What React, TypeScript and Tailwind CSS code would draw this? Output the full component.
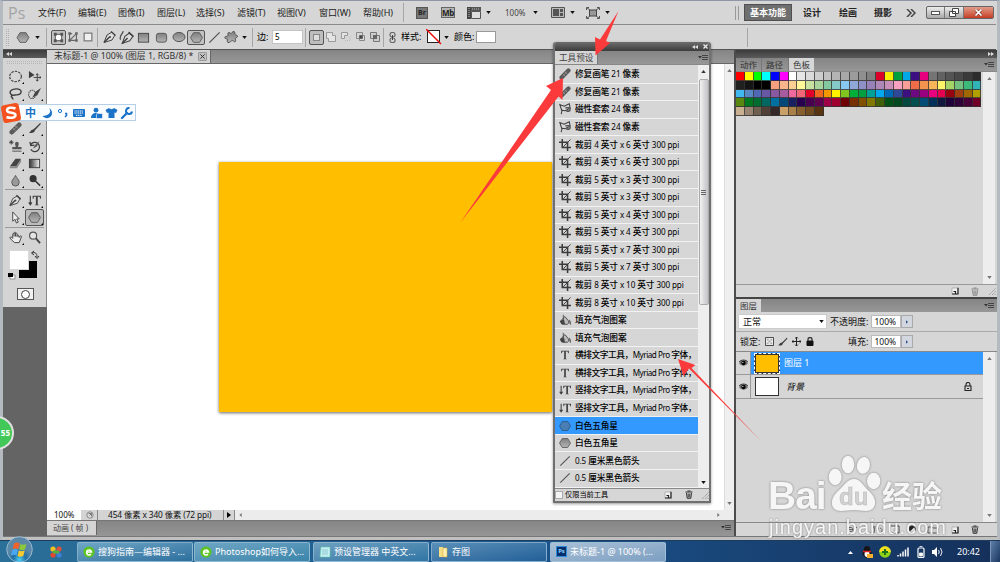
import type { ReactNode } from 'react'

const MENUS = [
  { label: '文件(F)', w: 'w-[40px]' },
  { label: '编辑(E)', w: 'w-[40px]' },
  { label: '图像(I)', w: 'w-[39px]' },
  { label: '图层(L)', w: 'w-[39px]' },
  { label: '选择(S)', w: 'w-[41px]' },
  { label: '滤镜(T)', w: 'w-[40px]' },
  { label: '视图(V)', w: 'w-[42px]' },
  { label: '窗口(W)', w: 'w-[44px]' },
  { label: '帮助(H)', w: 'w-[40px]' },
]

const PRESETS = [
  ['heal', '修复画笔 21 像素'],
  ['heal', '修复画笔 21 像素'],
  ['lasso', '磁性套索 24 像素'],
  ['lasso', '磁性套索 24 像素'],
  ['crop', '裁剪 4 英寸 x 6 英寸 300 ppi'],
  ['crop', '裁剪 4 英寸 x 6 英寸 300 ppi'],
  ['crop', '裁剪 5 英寸 x 3 英寸 300 ppi'],
  ['crop', '裁剪 5 英寸 x 3 英寸 300 ppi'],
  ['crop', '裁剪 5 英寸 x 4 英寸 300 ppi'],
  ['crop', '裁剪 5 英寸 x 4 英寸 300 ppi'],
  ['crop', '裁剪 5 英寸 x 7 英寸 300 ppi'],
  ['crop', '裁剪 5 英寸 x 7 英寸 300 ppi'],
  ['crop', '裁剪 8 英寸 x 10 英寸 300 ppi'],
  ['crop', '裁剪 8 英寸 x 10 英寸 300 ppi'],
  ['bucket', '填充气泡图案'],
  ['bucket', '填充气泡图案'],
  ['type', '横排文字工具，Myriad Pro 字体，'],
  ['type', '横排文字工具，Myriad Pro 字体，'],
  ['vtype', '竖排文字工具，Myriad Pro 字体，'],
  ['vtype', '竖排文字工具，Myriad Pro 字体，'],
  ['hexblue', '白色五角星'],
  ['hex', '白色五角星'],
  ['line', '0.5 厘米黑色箭头'],
  ['line', '0.5 厘米黑色箭头'],
]

const SWATCHES = (
  'ff0000 ffff00 00ff00 00ffff 0000ff ff00ff ffffff e6e6e6 dadada cdcdcd c0c0c0 b4b4b4 a8a8a8 9c9c9c 909090 808080 dc0028 f8f000 00a040 00a8e8 3c1080 e6007e 757575 626262 545454 484848 3a3a3a 2c2c2c ' +
  '202020 141414 000000 000000 f6a080 f9b48c fbcf92 fff799 c8e0a0 a8d49c 84c8a0 86c8c8 88c8f0 90a8d8 9090c8 9880b8 b088b8 c890b8 f8a0c0 f8a098 ee6c48 f29450 f8b458 fff468 a4d468 74c080 3cb878 30b4b8 ' +
  '40b8f0 5888c4 5068b4 6858a4 8858a0 a85ca0 f068a0 f06878 e00028 f06820 f49800 fff100 80c420 00b038 00a040 00a098 00a8f0 0068b8 304898 3c1080 6c0880 980080 e80080 e80050 980010 a04010 a06800 b0a000 ' +
  '588810 007820 006c30 006860 0070a0 004878 182060 280050 480050 600050 a00048 a00030 700008 783000 805000 807800 406008 005018 004820 004840 005050 004c74 003058 101840 200038 300038 480038 700028 ' +
  'c8b090 988470 706050 504038 342828 c8a068 a88048 886030 704c20 583410'
).split(' ')

const TASKS = [
  { kind: 'ie', label: '搜狗指南—编辑器 - ...', cls: 'ml-[15px] from-[#6fa6c4] to-[#2c6f9e]' },
  { kind: 'ie', label: 'Photoshop如何导入...', cls: 'ml-px from-[#6fa6c4] to-[#3a85ab]' },
  { kind: 'note', label: '预设管理器 中英文...', cls: 'ml-[3px] from-[#6fa0bf] to-[#2f75a5]' },
  { kind: 'folder', label: '存图', cls: 'ml-[2px] from-[#5a90b8] to-[#225f98]' },
  { kind: 'ps', label: '未标题-1 @ 100% (...', cls: 'ml-[3px] from-[#a9c0d6] to-[#7d9fc2]' },
]

function Glyph({ name }: { name: string }) {
  const s = { fill: 'none', stroke: '#3c3c3c', strokeWidth: 1.3 }
  switch (name) {
    case 'marquee':
      return <ellipse cx="7" cy="7" rx="6.3" ry="5.6" {...s} strokeWidth="1.2" strokeDasharray="2.6 1.2" />
    case 'move':
      return <g><path d="M1 1v8l6-3.7z" fill="#3c3c3c" /><path d="M10 4v8M6 8h8M8.7 5.5 10 4l1.3 1.5M8.7 10.500l1.300 1.500 1.300-1.500M12.500 6.700 14 8l-1.500 1.300" {...s} strokeWidth="1" /></g>
    case 'freelasso':
      return <path d="M3.500 9C-1 6.500 1.500 2 8 2c7 0 6.500 6 0 6.500-3 .2-5 0-5.500 1.500s2.500 1.500 1.500 3.500" {...s} strokeWidth="1.500" />
    case 'quick':
      return <g><ellipse cx="4.500" cy="8" rx="3.800" ry="4.500" {...s} strokeDasharray="1.500 .8" strokeWidth="1.100" /><path d="M14 1 8 5l-3.500 6.500L10 9z" fill="#444" /></g>
    case 'heal':
      return <g><path d="M3 11 11 3" stroke="#5a5a5a" strokeWidth="5" strokeLinecap="round" /><path d="m4.600 7 2.400 2.400M7 4.600 9.400 7" stroke="#c4c4c4" strokeWidth="1" strokeDasharray="1 .6" /><path d="m4.500 9 5-5" stroke="#8c8c8c" strokeWidth="1" /></g>
    case 'brush':
      return <path d="M13 1 7.500 6.500 5.500 8C3 8.200 3 10.500 1 11.500c3 1 6 .5 6.500-2.500L14 2z" fill="#3c3c3c" />
    case 'stamp':
      return <g><path d="M8.500 2a2 2 0 0 1 2 2c0 1-.7 2-.7 3.500h3.700V10h-10V7.500h3.700C7.200 6 6.500 5 6.500 4a2 2 0 0 1 2-2z" fill="#555" /><path d="M3.500 12h10M1 1l3 3M4 1 1 4M2.500 0v5M0 2.500h5" {...s} strokeWidth=".9" /></g>
    case 'history':
      return <g><path d="M3 5a5 5 0 1 1 0 5M2 2l1 4 4-.5" {...s} /><path d="M12.500 1 8 5 5 9.500 9.500 7z" fill="#555" /></g>
    case 'eraser':
      return <g><path d="M7 2h6L8 10H1z" fill="#444" /><path d="M8 10 13 2v3l-4.500 7H1v-2z" fill="#888" /></g>
    case 'gradient':
      return <rect x="1.500" y="2.500" width="11" height="9" fill="url(#grad)" stroke="#3c3c3c" />
    case 'drop':
      return <path d="M7 1.500C6 4.500 3 6 3 9a4 4 0 0 0 8 0C11 6 8 4.500 7 1.500z" fill="#999" stroke="#555" />
    case 'dodge':
      return <g><circle cx="5.500" cy="5" r="3.800" fill="#333" /><path d="m8 7.500 5 5" stroke="#333" strokeWidth="1.600" /></g>
    case 'pen':
      return <g><path d="M1 12.500 4 5l5-3 3 3-3 5z" fill="#ddd" stroke="#444" /><path d="m8 1.500 4.500 4M1 12.500l5.500-5.500" stroke="#444" strokeWidth="1.500" /><circle cx="7" cy="7" r="1" fill="#444" /></g>
    case 'freepen':
      return <g><path d="M3 12.500 5.500 6l4-3L13 6l-3 4z" fill="#ddd" stroke="#444" /><path d="M3 12.500 8 7.500M9 2l4.500 4" {...s} /><path d="M1.500 9C-.5 6 3.500 4 4 1" {...s} strokeWidth="1" /></g>
    case 'vtype':
      return <g><path d="M2.500 2v9M.8 9l1.700 2.500L4.200 9" {...s} strokeWidth="1.200" /><path d="M5 2h9v3h-.8L12.500 3h-2v8l1.200 1H7.300l1.200-1V3h-2L5.800 5H5z" fill="#444" /></g>
    case 'type':
      return <path d="M2.500 2h9v3h-.8L10 3H8v8l1.200 1H4.800L6 11V3H4l-.7 2h-.8z" fill="#444" />
    case 'arrow':
      return <path d="M4 1v10l2.500-2L8 13l2-1-1.700-3.500H11z" fill="#eee" stroke="#444" />
    case 'hex':
    case 'hexblue':
      return <path d="M3.800 1.800h6.400L13.400 7l-3.200 5.200H3.800L.6 7z" fill={name === 'hexblue' ? '#4a7fb5' : 'url(#hexg)'} stroke={name === 'hexblue' ? '#2c5684' : '#5a5a5a'} />
    case 'hand':
      return <path d="M4 8V3.500c0-1 1.500-1 1.500 0V2c0-1 1.500-1 1.500 0v1c0-1 1.700-1 1.700 0v2c0-1 1.600-1 1.600 0L11 7l1-1.500c.8-.8 1.800 0 1.300 1L11 12.500H6C4 11 2.500 9.500 1 7.500 1 6 2.500 6 4 8zM5.500 3.500V6M7 3v3M8.700 5v1.500" fill="#ececec" stroke="#3c3c3c" strokeWidth="1" />
    case 'zoom':
      return <g><circle cx="5.500" cy="5" r="3.800" fill="#e4e4e4" stroke="#555" strokeWidth="1.200" /><path d="m8.500 8 4.500 5" stroke="#444" strokeWidth="2" /></g>
    case 'lasso':
      return <g><path d="M3 13c-1.500-1.500 1-2 .3-4L1 1.800l5 2L12 1l1 5-6 3-3.500-.5" {...s} strokeWidth="1.200" /><path d="M7.500 5.500h4c1.800 0 1.800 4 0 4h-3" {...s} stroke="#555" strokeWidth="1.800" /></g>
    case 'crop':
      return <g><path d="M3.800 0v10H14M0 3.800h10V14" {...s} strokeWidth="1.800" /><path d="M5 9 13.500.5" {...s} strokeWidth="1.100" /></g>
    case 'bucket':
      return <g><path d="M5 1v6M2 8l5-5 4 5c1 2 0 3-1 4H4z" fill="#bbb" stroke="#444" /><path d="M1 9c1-2 3-3 5-2l1 5H3zM12 6c2 2 2 5 1.500 7-1.500-2-1.500-4-1.500-7z" fill="#444" /></g>
    case 'line':
      return <path d="M1.500 12.500 12.500 1.500" {...s} stroke="#555" />
    case 'rect':
      return <rect x="1.500" y="2.500" width="11" height="9.500" fill="url(#hexg)" stroke="#444" />
    case 'rrect':
      return <rect x="1.500" y="2.500" width="11" height="9.500" rx="2.500" fill="url(#hexg)" stroke="#555" />
    case 'ellipse':
      return <ellipse cx="7" cy="7" rx="6" ry="4.600" fill="url(#hexg)" stroke="#555" />
    case 'blob':
      return <path d="M5 2.500c1.500 0 1.500 1.500 2.300 1 1-.7.900-2.500 2.700-2 1.700.6.300 2.500 1 3.200s2.800.1 2.500 1.800c-.3 1.400-2 1-2.200 1.800s1.200 3-.3 3.500c-1.300.4-1.500-1.500-2.800-1.300S6 13 4 12.500c-1.800-.6 0-2.500-.5-3.200S.800 9 .8 7.500 3.500 6.500 4 6s-1-3.500 1-3.500z" fill="url(#hexg)" stroke="#555" />
    case 'shapelayer':
      return <g><rect x="3.500" y="3.500" width="7" height="7" fill="#fff" stroke="#444" /><path d="M2 2h3v3H2zM9 2h3v3H9zM2 9h3v3H2zM9 9h3v3H9z" fill="#555" /></g>
    case 'paths':
      return <g><path d="M3 3v8l8-8v8M3 3h3M4 11h6" {...s} stroke="#666" /><path d="M1.500 1.500h3v3h-3zM9.500 1.500h3v3h-3zM1.500 9.500h3v3h-3zM9.500 9.500h3v3h-3z" fill="#666" /></g>
    case 'pixels':
      return <rect x="2.500" y="2.500" width="9" height="9" fill="#f0f0f0" stroke="#777" strokeWidth="1.400" />
    default:
      return null
  }
}

function Icon({ name, size = 'w-[14px] h-[14px]' }: { name: string; size?: string }) {
  return (
    <svg viewBox="0 0 14 14" className={`${size} shrink-0`}>
      <Glyph name={name} />
    </svg>
  )
}

function Caret({ className = '' }: { className?: string }) {
  return (
    <svg viewBox="0 0 6 4" className={`w-[5px] h-[3px] shrink-0 ${className}`}>
      <path d="M0 0h6L3 4z" fill="#111" />
    </svg>
  )
}

function Sep({ className = '' }: { className?: string }) {
  return <div className={`w-px h-[19px] shrink-0 bg-[#a5a5a5] ${className}`} />
}

function PanelMenu() {
  return (
    <svg viewBox="0 0 10 8" className="w-[10px] h-[8px] shrink-0">
      <path d="M0 2h4L2 4.500z" fill="#333" />
      <path d="M4 1.500h6M4 3.500h6M4 5.500h6" stroke="#444" strokeWidth="1" />
    </svg>
  )
}

function Chevrons({ right = false }: { right?: boolean }) {
  return (
    <svg viewBox="0 0 6 4" className="w-[6px] h-[4px] shrink-0">
      <path d={right ? 'M0 0v4l3-2zM3 0v4l3-2z' : 'M3 0v4L0 2zM6 0v4L3 2z'} fill="#ddd" />
    </svg>
  )
}

function NewIcon() {
  return (
    <svg viewBox="0 0 8 8" className="w-[8px] h-[8px] shrink-0">
      <path d="M1 1h6v6H1z" fill="#f0f0f0" stroke="#aaa" strokeWidth=".8" />
      <path d="M7 .8V7H1M4.500 7V4.500H2.500" fill="none" stroke="#222" strokeWidth="1.200" />
    </svg>
  )
}

function TrashIcon({ dim = false }: { dim?: boolean }) {
  return (
    <svg viewBox="0 0 8 9" className="w-[8px] h-[9px] shrink-0">
      <path d="M.5 2h7M2.500 1h3M1.500 3l.7 5.300h3.600L6.500 3M3.200 3.500v4M4.800 3.500v4" fill="none" stroke={dim ? '#888' : '#333'} strokeWidth="1" />
    </svg>
  )
}

function Grip() {
  return (
    <svg viewBox="0 0 8 8" className="w-[8px] h-[8px] shrink-0">
      <path d="M1 8 8 1M4 8l4-4M6.500 8 8 6.500" stroke="#9a9a9a" strokeWidth="1" strokeDasharray="1.400 .5" />
    </svg>
  )
}

function ScrollArrow({ down = false }: { down?: boolean }) {
  return (
    <svg viewBox="0 0 6 4" className="w-[5px] h-[3px] shrink-0">
      <path d={down ? 'M0 0h6L3 4z' : 'M0 4h6L3 0z'} fill="#777" />
    </svg>
  )
}

function MenuBar() {
  return (
    <div className="flex items-center h-[23px] shrink-0 text-[9px] text-[#222]">
      <div className="w-[35px] pl-[5px] text-[16px] leading-none text-[#a4a4a4] font-['Open_Sans']">Ps</div>
      {MENUS.map((m) => (
        <div key={m.label} className={`${m.w} shrink-0 whitespace-nowrap`}>{m.label}</div>
      ))}
      <Sep className="h-[15px]" />
      <div className="ml-[12px] w-[12px] h-[12px] bg-[#777] border border-[#555] text-[7px] leading-[10px] font-bold text-center text-[#222]">Br</div>
      <div className="ml-[13px] w-[14px] h-[11px] bg-[#b5b5b5] border border-[#666] text-[8px] leading-[9px] font-bold text-center tracking-tighter text-[#222]">Mb</div>
      <svg viewBox="0 0 14 12" className="ml-[12px] w-[14px] h-[12px]">
        <path d="M0 0h4v12H0z" fill="#444" />
        <path d="M4 0h10v4H4z" fill="#555" />
        <path d="M4.500 4.500h9v7h-9z" fill="#ddd" stroke="#555" />
        <path d="M2 1v10M5 2h8" stroke="#bbb" strokeDasharray="1 1" />
      </svg>
      <Caret className="ml-[5px]" />
      <div className="ml-[14px] w-[25px] text-[8px] text-[#444]">100%</div>
      <Caret className="ml-[3px]" />
      <svg viewBox="0 0 14 11" className="ml-[13px] w-[14px] h-[11px]">
        <path d="M.5.5h13v10H.5z" fill="#bbb" stroke="#555" />
        <path d="M2 2h6v7H2zM9 2h3v3H9zM9 6h3v3H9z" fill="#555" />
      </svg>
      <Caret className="ml-[5px]" />
      <svg viewBox="0 0 14 12" className="ml-[11px] w-[14px] h-[12px]">
        <path d="M3.500 3h7v6h-7z" fill="#999" stroke="#444" />
        <path d="M.5 3V.5H3M11 .5h2.500V3M13.500 9v2.500H11M3 11.500H.5V9M1 1l3 2M13 1l-3 2M1 11l3-2M13 11l-3-2" stroke="#555" fill="none" />
      </svg>
      <Caret className="ml-[5px]" />
      <div className="ml-auto w-[4px] h-[14px] border-x border-[#999]" />
      <div className="ml-[5px] w-[48px] h-[17px] bg-[#6e6e6e] border border-[#4f4f4f] text-white font-bold text-center leading-[15px]">基本功能</div>
      <div className="ml-[11px] w-[36px] font-bold">设计</div>
      <div className="w-[35px] font-bold">绘画</div>
      <div className="w-[32px] font-bold">摄影</div>
      <svg viewBox="0 0 10 8" className="w-[10px] h-[8px]">
        <path d="m1 0 4 4-4 4M5 0l4 4-4 4" fill="none" stroke="#444" strokeWidth="1.500" />
      </svg>
      <div className="ml-[10px] mr-[3px] flex w-[68px] h-[13px] rounded-[2px] border border-[#666] overflow-hidden bg-gradient-to-b from-[#ececec] to-[#aaa]">
        <div className="w-[18px] border-r border-[#777] flex items-center justify-center">
          <div className="w-[9px] h-[4px] bg-white border border-[#555]" />
        </div>
        <div className="w-[19px] border-r border-[#777] flex items-center justify-center">
          <svg viewBox="0 0 10 9" className="w-[10px] h-[9px]">
            <path d="M3.500.5h6v5h-6zM.5 3.500h6v5h-6z" fill="#fff" stroke="#444" />
          </svg>
        </div>
        <div className="flex-1 bg-gradient-to-b from-[#e09a88] to-[#c43a22] flex items-center justify-center">
          <svg viewBox="0 0 8 7" className="w-[9px] h-[7px]">
            <path d="m1 .5 6 6M7 .5l-6 6" stroke="#6b2a20" strokeWidth="2.600" />
            <path d="m1 .5 6 6M7 .5l-6 6" stroke="#fff" strokeWidth="1.700" />
          </svg>
        </div>
      </div>
    </div>
  )
}

function OptionsBar() {
  return (
    <div className="flex items-center h-[26px] shrink-0 border-y border-[#8a8a8a] border-b-[#555] text-[9px] text-black pl-[3px] mr-[1px]">
      <div className="w-[3px] h-[17px] border-x border-dotted border-[#b0b0b0]" />
      <Icon name="hex" size="ml-[7px] w-[14px] h-[13px]" />
      <Caret className="ml-[5px]" />
      <Sep className="ml-[6px]" />
      <div className="ml-[4px] w-[15px] h-[15px] border border-[#555] rounded-[2px] bg-[#c2c2c2]"><Icon name="shapelayer" size="w-[13px] h-[13px]" /></div>
      <Icon name="paths" size="ml-[1px] w-[12px] h-[12px]" />
      <Icon name="pixels" size="ml-[3px] w-[12px] h-[12px]" />
      <Sep className="ml-[3px]" />
      <Icon name="pen" size="ml-[5px] w-[14px] h-[14px]" />
      <Icon name="freepen" size="ml-[2px] w-[15px] h-[15px]" />
      <Icon name="rect" size="ml-[3px] w-[13px] h-[13px]" />
      <Icon name="rrect" size="ml-[5px] w-[13px] h-[13px]" />
      <Icon name="ellipse" size="ml-[4px] w-[14px] h-[14px]" />
      <div className="ml-[1px] w-[18px] h-[15px] flex justify-center border border-[#555] rounded-[2px] bg-[#c2c2c2]"><Icon name="hex" size="w-[13px] h-[13px]" /></div>
      <Icon name="line" size="ml-[3px] w-[13px] h-[13px]" />
      <Icon name="blob" size="ml-[3px] w-[14px] h-[14px]" />
      <Caret className="ml-[4px]" />
      <Sep className="ml-[5px]" />
      <div className="ml-[4px] w-[15px] whitespace-nowrap">边:</div>
      <div className="w-[31px] h-[14px] bg-white border border-[#c4c4c4] pl-[2px] text-[8px] leading-[12px]">5</div>
      <Sep className="ml-[2px]" />
      <div className="ml-[3px] w-[15px] h-[15px] border border-[#555] rounded-[2px] bg-[#bdbdbd] p-[3px]"><div className="h-full bg-[#ddd] border border-[#888]" /></div>
      <svg viewBox="0 0 54 10" className="ml-[2px] w-[54px] h-[10px]">
        <path d="M.5.5h6v3h3v6h-7v-3h-2z" fill="#e4e4e4" stroke="#999" />
        <path d="M15.500 6.500v-6h6v3h-3v3z" fill="#e4e4e4" stroke="#999" />
        <path d="M19 8.500h5v-5" fill="none" stroke="#bbb" strokeDasharray="1 1" />
        <path d="M30.500.5h6v6h-6zM33.500 3.500h5v5h-5z" fill="none" stroke="#888" />
        <path d="M33.500 3.500h3v3h-3z" fill="#444" />
        <path d="M44.500.5h6v3h3v6h-6v-3h-3z" fill="#ccc" stroke="#777" />
        <path d="M47 3h4v4h-4z" fill="#666" />
      </svg>
      <Sep className="ml-[3px]" />
      <svg viewBox="0 0 7 11" className="ml-[5px] w-[7px] h-[11px]">
        <rect x="1" y=".5" width="5" height="4.500" rx="2" fill="none" stroke="#666" strokeWidth="1.200" />
        <rect x="1" y="6" width="5" height="4.500" rx="2" fill="none" stroke="#666" strokeWidth="1.200" />
        <path d="M3.500 3v5" stroke="#444" />
      </svg>
      <div className="ml-[5px] w-[25px] whitespace-nowrap">样式:</div>
      <svg viewBox="0 0 16 16" className="w-[16px] h-[16px]">
        <rect x="1.500" y="1.500" width="12" height="12" fill="#fff" stroke="#222" />
        <path d="m0 0 15 15" stroke="#e81010" strokeWidth="1.500" />
      </svg>
      <Caret className="ml-[2px]" />
      <div className="ml-[5px] w-[22px] whitespace-nowrap">颜色:</div>
      <div className="w-[20px] h-[12px] bg-white border border-[#999]" />
      <Sep className="ml-auto mr-[248px]" />
    </div>
  )
}

const TOOL_ROWS: [string, string][] = [
  ['marquee', 'move'],
  ['freelasso', 'quick'],
  ['crop', 'type'],
  ['heal', 'brush'],
  ['stamp', 'history'],
  ['eraser', 'gradient'],
  ['drop', 'dodge'],
]

function ToolCell({ name, active = false, corner = true }: { name: string; active?: boolean; corner?: boolean }) {
  return (
    <div className={`relative w-[19px] h-[17px] flex items-center justify-center border rounded-[2px] ${active ? 'border-[#555] bg-[#bcbcbc]' : 'border-transparent'}`}>
      <Icon name={name} size="w-[13px] h-[13px]" />
      {corner && (
        <svg viewBox="0 0 3 3" className="absolute right-0 bottom-0 w-[2px] h-[2px]">
          <path d="M3 0v3H0z" fill="#000" />
        </svg>
      )}
    </div>
  )
}

function Toolbox() {
  return (
    <div className="flex flex-col w-[44px] shrink-0 bg-[#646464]">
      <div className="h-[8px] shrink-0 bg-gradient-to-b from-[#3c3c3c] to-[#5a5a5a] pl-[3px] pt-[2px]"><Chevrons /></div>
      <div className="h-[249px] shrink-0 bg-[#d4d4d4] flex flex-col border-r border-[#888]">
        <div className="mt-[3px] mx-[4px] h-[3px] border-y border-dotted border-[#b4b4b4]" />
        <div className="mt-[4px] flex flex-col gap-[0.4px] pl-[3px]">
          {TOOL_ROWS.map(([a, b]) => (
            <div key={a} className="flex"><ToolCell name={a} /><ToolCell name={b} corner={b !== 'move'} /></div>
          ))}
        </div>
        <div className="mx-[2px] h-px shrink-0 bg-[#999]" />
        <div className="mt-[2px] flex flex-col pl-[3px]">
          <div className="flex"><ToolCell name="pen" /><ToolCell name="vtype" /></div>
          <div className="flex"><ToolCell name="arrow" /><ToolCell name="hex" active /></div>
        </div>
        <div className="mx-[2px] h-px mt-px shrink-0 bg-[#999]" />
        <div className="mt-[1px] flex pl-[3px]"><ToolCell name="hand" /><ToolCell name="zoom" corner={false} /></div>
        <svg viewBox="0 0 34 32" className="ml-[4px] mt-[2px] w-[34px] h-[32px] shrink-0">
          <rect x="12" y="13" width="18" height="17" fill="#000" />
          <rect x="2.500" y="2.500" width="19" height="19" fill="#fff" stroke="#d8d8d8" />
          <path d="M25 5c3-1 5 0 5 4M27 3l-2.500 2L27 7M28 8l2 2.500L32 8" fill="none" stroke="#333" />
          <path d="M3 27h5v4H3z" fill="#fff" stroke="#555" strokeWidth=".6" />
          <path d="M1 25h5v4H1z" fill="#000" />
        </svg>
        <div className="ml-[14px] mt-[8px] w-[17px] h-[12px] bg-[#f2f2f2] border border-[#555] flex items-center justify-center">
          <div className="w-[9px] h-[9px] rounded-full bg-white border border-[#444]" />
        </div>
      </div>
    </div>
  )
}

function Document() {
  return (
    <div className="flex flex-col flex-1 min-w-0 bg-[#8d8d8d]">
      <div className="h-[14px] shrink-0 bg-gradient-to-b from-[#858585] to-[#979797] border-b border-[#666] flex">
        <div className="w-[164px] h-[13px] bg-[#d4d4d4] border-r border-[#666] pl-[7px] flex items-center text-[8.8px] text-[#333]">
          <span className="w-[144px] shrink-0 whitespace-nowrap leading-[13px]">未标题-1 @ 100% (图层 1, RGB/8) *</span>
          <span className="w-[9px] h-[9px] shrink-0 bg-[#c2c2c2] border border-[#999] rounded-[1px] flex items-center justify-center">
            <svg viewBox="0 0 6 6" className="w-[5px] h-[5px]"><path d="m.5.5 5 5m0-5-5 5" stroke="#333" strokeWidth="1.200" /></svg>
          </span>
        </div>
      </div>
      <div className="flex flex-1 min-h-0">
        <div className="flex-1 bg-white pt-[98px] pl-[172px]">
          <div className="w-[333px] h-[250px] bg-[#ffbf00] shadow-[0_1px_3px_rgba(0,0,0,0.6)]" />
        </div>
        <div className="w-[10px] bg-[#efefef] border-l border-[#ddd] flex flex-col items-center justify-between pt-[5px] pb-[5px]">
          <ScrollArrow />
          <ScrollArrow down />
        </div>
      </div>
      <div className="h-[11px] shrink-0 flex items-center bg-[#ececec] text-[8px] leading-[10px] text-[#111] border-b border-[#777]">
        <div className="w-[34px] h-[10px] bg-white pl-[7px]">100%</div>
        <div className="w-[17px] h-[10px] bg-[#d4d4d4] border-r border-[#888] flex items-center pl-[5px]">
          <svg viewBox="0 0 8 8" className="w-[8px] h-[8px]"><circle cx="4" cy="4" r="3.200" fill="#ddd" stroke="#888" /><path d="M2.500 2.500h3v3M5.500 2.500l-2 2" fill="none" stroke="#777" /></svg>
        </div>
        <div className="w-[126px] h-[10px] bg-[#d4d4d4] border-r border-[#888] pl-[10px] text-[8.300px] tracking-[-0.1px] whitespace-nowrap">454 像素 x 340 像素 (72 ppi)</div>
        <div className="w-[11px] h-[10px] bg-[#d4d4d4] border-r border-[#888] flex items-center justify-center">
          <svg viewBox="0 0 4 6" className="w-[4px] h-[6px]"><path d="M0 0v6l4-3z" fill="#000" /></svg>
        </div>
        <svg viewBox="0 0 3 5" className="ml-[4px] w-[3px] h-[4px]"><path d="M3 0v5L0 2.500z" fill="#777" /></svg>
        <svg viewBox="0 0 3 5" className="ml-auto mr-[14px] w-[3px] h-[4px]"><path d="M0 0v5l3-2.500z" fill="#777" /></svg>
      </div>
      <div className="h-[15px] shrink-0 flex justify-between bg-gradient-to-b from-[#858585] to-[#969696]">
        <div className="w-[50px] h-[14px] bg-[#d4d4d4] border-r border-[#666] pl-[6px] text-[8px] leading-[13px] text-[#444] whitespace-pre">动画 ( 帧 )</div>
        <div className="pt-[3px] pr-[3px]"><PanelMenu /></div>
      </div>
    </div>
  )
}

function PercentField({ label }: { label: string }) {
  return (
    <div className="flex items-center">
      <span className="whitespace-nowrap mr-[3px]">{label}</span>
      <div className="w-[30px] h-[13px] bg-white border border-[#bbb] text-[8.500px] leading-[11px] pl-[2px]">100%</div>
      <div className="w-[12px] h-[13px] bg-[#d2d6de] border border-[#aaa] flex items-center justify-center">
        <svg viewBox="0 0 3 5" className="w-[2px] h-[4px]"><path d="M0 0v5l3-2.500z" fill="#2d4f90" /></svg>
      </div>
    </div>
  )
}

function Eye() {
  return (
    <div className="w-[15px] flex items-center justify-center border-r border-[#999] self-stretch">
      <svg viewBox="0 0 10 8" className="w-[9px] h-[8px]">
        <path d="M0 4c2-4 8-4 10 0-2 4-8 4-10 0z" fill="#777" />
        <circle cx="5" cy="4" r="2.400" fill="#000" />
        <circle cx="4.300" cy="3.200" r=".7" fill="#fff" />
        <path d="M0 3c2-3 8-3 10 0" fill="none" stroke="#222" />
      </svg>
    </div>
  )
}

function RightDock() {
  return (
    <div className="flex flex-col w-[263px] shrink-0 bg-[#d6d6d6] border-l-2 border-[#4c4c4c] text-[9px] text-[#111]">
      <div className="h-[8px] shrink-0 bg-gradient-to-b from-[#3c3c3c] to-[#5a5a5a] flex justify-end pr-[3px] pt-[2px]"><Chevrons right /></div>
      <div className="h-[14px] shrink-0 flex bg-gradient-to-b from-[#858585] to-[#979797] text-[8.500px] leading-[14px] border-b border-[#888]">
        <div className="w-[26px] pl-[4px] border-r border-[#777] text-[#333]">动作</div>
        <div className="w-[27px] pl-[4px] border-r border-[#777] text-[#333]">路径</div>
        <div className="w-[25px] pl-[4px] bg-[#d6d6d6] text-[#333]">色板</div>
        <div className="ml-auto mr-[3px] mt-[3px]"><PanelMenu /></div>
      </div>
      <div className="h-[212px] shrink-0 flex">
        <div className="flex-1">
          <div className="grid grid-cols-[repeat(28,8.77px)] auto-rows-[8.8px] w-[246px]">
            {SWATCHES.map((c, i) => (
              <div key={i} className="border-r border-b border-[#333]/80" style={{ backgroundColor: '#' + c }} />
            ))}
          </div>
        </div>
        <div className="w-[12px] mr-[2px] bg-[#ededed] flex flex-col items-center justify-between py-[5px]">
          <ScrollArrow />
          <ScrollArrow down />
        </div>
      </div>
      <div className="h-[13px] shrink-0 border-t border-[#999] flex items-center justify-end pr-px">
        <NewIcon />
        <div className="ml-[12px] mr-[9px]"><TrashIcon dim /></div>
        <Grip />
      </div>
      <div className="h-[2px] shrink-0 bg-[#444]" />
      <div className="h-[13px] shrink-0 flex bg-gradient-to-b from-[#858585] to-[#979797] text-[8.500px] leading-[13px]">
        <div className="w-[25px] pl-[4px] bg-[#d6d6d6] text-[#333]">图层</div>
        <div className="ml-auto mr-[3px] mt-[3px]"><PanelMenu /></div>
      </div>
      <div className="h-[20px] shrink-0 flex items-center border-b border-[#aaa]">
        <div className="ml-[2px] mr-[3px] w-[89px] h-[15px] bg-white border border-[#ccc] flex items-center justify-between pl-[4px] pr-[2px] text-[9px]">
          正常
          <Caret />
        </div>
        <PercentField label="不透明度:" />
      </div>
      <div className="h-[20px] shrink-0 flex items-center border-b border-[#888]">
        <span className="ml-[4px] w-[25px] whitespace-nowrap">锁定:</span>
        <svg viewBox="0 0 10 10" className="w-[9px] h-[9px]"><path d="M.5.5h9v9h-9z" fill="#eee" stroke="#333" /><path d="M2 2h2v2H2zM6 2h2v2H6zM4 4h2v2H4zM2 6h2v2H2zM6 6h2v2H6z" fill="#aaa" /></svg>
        <Icon name="brush" size="ml-[3px] w-[11px] h-[10px]" />
        <svg viewBox="0 0 10 10" className="ml-[4px] w-[9px] h-[9px]"><path d="M5 0v10M0 5h10M3.500 1.500 5 0l1.500 1.500M3.500 8.500 5 10l1.500-1.500M1.500 3.500 0 5l1.500 1.500M8.500 3.500 10 5 8.500 6.500" fill="none" stroke="#222" strokeWidth="1.100" /></svg>
        <svg viewBox="0 0 8 9" className="ml-[5px] mr-[34px] w-[8px] h-[9px]"><path d="M1 4h6v4.500H1z" fill="#111" stroke="#111" /><path d="M2 4V2.500a2 2 0 0 1 4 0V4" fill="none" stroke="#333" strokeWidth="1.300" /></svg>
        <PercentField label="填充:" />
      </div>
      <div className="flex-1 min-h-0 flex">
        <div className="flex-1 flex flex-col">
          <div className="h-[23px] flex items-center border-b border-[#999]">
            <Eye />
            <div className="flex-1 h-full bg-[#3399ff] flex items-center pl-[3px] text-white">
              <div className="w-[26px] h-[21px] border border-dashed border-white bg-[#333] p-px"><div className="h-full bg-[#ffbf00]" /></div>
              <span className="ml-[4px]">图层 1</span>
            </div>
          </div>
          <div className="h-[24px] flex items-center border-b border-[#999]">
            <Eye />
            <div className="ml-[4px] w-[24px] h-[19px] bg-white border border-[#333]" />
            <span className="ml-[7px] italic">背景</span>
            <svg viewBox="0 0 8 9" className="ml-auto mr-[11px] w-[8px] h-[9px]"><path d="M1 4h6v4.500H1zM2 4V2.500a2 2 0 0 1 4 0V4" fill="none" stroke="#222" strokeWidth="1.100" /><path d="M3 6.500h2" stroke="#222" /></svg>
          </div>
        </div>
        <div className="w-[12px] mr-[2px] bg-[#ededed] flex flex-col items-center justify-between py-[5px]">
          <ScrollArrow />
          <ScrollArrow down />
        </div>
      </div>
      <div className="h-[14px] shrink-0 border-t border-[#888] flex items-center justify-end gap-[12px] pr-[18px]">
        <svg viewBox="0 0 92 9" className="w-[92px] h-[9px]">
          <path d="M0 4.500h6M2 2.500h2a2 2 0 0 1 0 4H2a2 2 0 0 1 0-4M8 2.500h2" fill="none" stroke="#666" />
          <path d="M24 8l3-7M28 1l-1 7M32 3a2.500 2.500 0 1 0 1 0" fill="none" stroke="#666" />
          <path d="M43 1h9v7h-9z" fill="#eee" stroke="#444" /><circle cx="47.500" cy="4.500" r="2" fill="#ccc" />
          <circle cx="65" cy="4.500" r="3.500" fill="#eee" stroke="#222" /><path d="M62.500 7a3.500 3.500 0 0 1 5-5z" fill="#222" />
          <path d="M81 2h4l1 1h5v5H81z" fill="none" stroke="#555" />
        </svg>
        <NewIcon />
        <TrashIcon />
      </div>
    </div>
  )
}

function PresetLabel({ text }: { text: string }) {
  const long = text.includes('Myriad')
  return (
    <span className={`whitespace-nowrap font-medium text-[8.700px] ${long ? 'tracking-[-0.45px]' : 'tracking-[-0.1px]'}`}>
      {text.split(/([\x20-\x7e]+)/).map((part, i) =>
        i % 2 === 1 ? <span key={i} className="text-[8.100px] font-normal">{part}</span> : part
      )}
    </span>
  )
}

function PresetWindow() {
  return (
    <div className="absolute left-[553px] top-[42px] w-[158px] h-[461px] flex flex-col bg-[#d6d6d6] border-2 border-t-0 border-[#707070] rounded-t-[3px] overflow-hidden shadow-[0_1px_3px_rgba(0,0,0,0.4)]">
      <div className="h-[9px] shrink-0 bg-gradient-to-b from-[#6e6e6e] to-[#3c3c3c] flex items-center justify-end gap-[5px] pr-px">
        <Chevrons />
        <svg viewBox="0 0 5 5" className="w-[5px] h-[5px]"><path d="m.5.5 4 4m0-4-4 4" stroke="#eee" strokeWidth="1.200" /></svg>
      </div>
      <div className="h-[14px] shrink-0 flex bg-gradient-to-b from-[#858585] to-[#979797] border-b border-[#888]">
        <div className="w-[43px] pl-[4px] bg-[#d6d6d6] border-r border-[#777] text-[8.600px] leading-[14px] text-[#444] whitespace-nowrap">工具预设</div>
        <div className="ml-auto mt-[3px] mr-px"><PanelMenu /></div>
      </div>
      <div className="flex flex-1 min-h-0">
        <div className="w-[143px] pt-px flex flex-col shrink-0">
          {PRESETS.map(([icon, label], i) => (
            <div key={i} className={`h-[17.57px] shrink-0 flex items-center border-b border-[#f2f2f2] leading-[12px] text-black ${icon === 'hexblue' ? 'bg-[#3399ff]' : ''}`}>
              <Icon name={icon} size="ml-[4px] mr-[4px] w-[12px] h-[12px]" />
              <PresetLabel text={label} />
            </div>
          ))}
        </div>
        <div className="w-[11px] bg-[#eee] flex flex-col items-center pt-[5px]">
          <svg viewBox="0 0 6 4" className="w-[5px] h-[3px] shrink-0"><path d="M0 4h6L3 0z" fill="#333" /></svg>
          <div className="mt-[6px] w-[10px] h-[226px] shrink-0 rounded-[2px] border border-[#aaa] bg-gradient-to-r from-[#f2f2f2] to-[#c2c2c8] flex items-center justify-center">
            <div className="w-[5px] h-[5px] border-y border-[#666] flex items-center"><div className="w-full h-px bg-[#666]" /></div>
          </div>
          <Caret className="mt-auto mb-[4px]" />
        </div>
      </div>
      <div className="h-[13px] shrink-0 border-t border-[#888] flex items-center text-[7.200px] pb-px">
        <div className="w-[8px] h-[8px] bg-[#f4f4f4] border border-[#aaa]" />
        <span className="ml-[2px] whitespace-nowrap">仅限当前工具</span>
        <div className="ml-auto flex items-center">
          <NewIcon />
          <div className="ml-[13px] mr-[8px]"><TrashIcon /></div>
          <Grip />
        </div>
      </div>
    </div>
  )
}

function ImeBar() {
  return (
    <div className="absolute left-[1px] top-[102px] flex items-center h-[21px] w-[135px]">
      <div className="absolute left-[12px] right-0 top-[2px] bottom-[2px] bg-[#fafdff] border border-[#b5cfe8]" />
      <svg viewBox="0 0 20 20" className="relative w-[20px] h-[20px]">
        <rect x="1" y="1" width="18" height="18" rx="3" fill="#f4511e" transform="rotate(-10 10 10)" />
        <path d="M14.500 5.500C11 4 6 4.500 6 7.500c0 3.200 8.500 1.500 8.500 4.500 0 3-5.500 3.500-9 2" fill="none" stroke="#fff" strokeWidth="2.500" />
      </svg>
      <span className="relative ml-[4px] w-[17px] text-[11px] leading-none font-bold text-[#1b73c8]">中</span>
      <svg viewBox="0 0 92 12" className="relative w-[92px] h-[12px]">
        <path d="M7 1c3 4 0 8-6.500 8C4 13 10 11 10 6 10 4 9 2 7 1z" fill="#1b73c8" />
        <circle cx="18" cy="4" r="1.600" fill="none" stroke="#1b73c8" /><path d="M23 6.500h1.500v2L23 10" stroke="#1b73c8" strokeWidth="1.600" fill="none" />
        <rect x="31" y="2" width="12" height="8" rx="1" fill="#1b73c8" /><path d="M32.500 4h9M32.500 6h9M34 8.300h6" stroke="#fff" strokeWidth="1" strokeDasharray="1.200 .6" />
        <circle cx="54" cy="3.200" r="2.400" fill="#1b73c8" /><path d="M49 11c0-3 2-5 5-5s4 1 4 3v2z" fill="#1b73c8" /><rect x="54.500" y="6.500" width="6" height="5" rx="1" fill="#1b73c8" stroke="#fff" strokeWidth=".6" />
        <path d="m67 1-3.500 2L65 6l1.500-.5V11h6V5.500L74 6l1.500-3L72 1c-1 1.500-4 1.500-5 0z" fill="#1b73c8" />
        <path d="m80 11 5-5" stroke="#1b73c8" strokeWidth="2.300" strokeLinecap="round" /><path d="M87.500 1a3 3 0 1 0 2.500 3.500" fill="none" stroke="#1b73c8" strokeWidth="2" />
      </svg>
    </div>
  )
}

function Watermark() {
  return (
    <div className="absolute left-[768px] top-[454px] w-[180px] h-[88px] text-[#f6f6f6] drop-shadow-[0_0_1px_rgba(90,90,90,0.7)]">
      <span className="absolute left-0 top-[22px] font-['Liberation_Sans'] font-bold text-[39px] leading-[40px] tracking-[-1px]">Bai</span>
      <svg viewBox="0 0 54 58" className="absolute left-[60px] top-0 w-[54px] h-[58px]">
        <g fill="#f6f6f6">
          <ellipse cx="7.200" cy="23" rx="6.500" ry="8.300" />
          <ellipse cx="20" cy="10.500" rx="6.200" ry="8.800" />
          <ellipse cx="35.500" cy="11.500" rx="6.500" ry="8.500" transform="rotate(10 36 11)" />
          <ellipse cx="45.700" cy="27" rx="6.700" ry="8.300" />
          <path d="M26 25c7 0 9 7 15 12 10 9 7 20-3 20-5 0-7-1-12-1s-8 1-13 1c-11 0-12-12-3-20 6-5 9-12 16-12z" />
        </g>
        <text x="11" y="51" fontFamily="Liberation Sans" fontWeight="bold" fontSize="24" fill="#d2d2d2" stroke="#b8b8b8" strokeWidth=".5">du</text>
      </svg>
      <span className="absolute left-[114px] top-[26px] text-[30px] leading-[32px] font-bold whitespace-nowrap">经验</span>
      <span className="absolute left-[1px] top-[62px] font-['Liberation_Sans'] text-[20px] leading-[22px] tracking-[0.980px] whitespace-nowrap">jingyan.baidu.com</span>
    </div>
  )
}

function TaskIcon({ kind }: { kind: string }): ReactNode {
  if (kind === 'ie')
    return (
      <svg viewBox="0 0 12 12" className="w-[12px] h-[12px] shrink-0">
        <circle cx="6" cy="6" r="5.600" fill="#5cc321" />
        <path d="M3.500 6h5a2.500 2.500 0 1 0-.5 2" fill="none" stroke="#fff" strokeWidth="1.500" />
      </svg>
    )
  if (kind === 'note')
    return (
      <svg viewBox="0 0 12 12" className="w-[12px] h-[12px] shrink-0">
        <path d="M2 1h9v10H1z" fill="#c5eef5" stroke="#6ca" strokeWidth=".6" /><path d="M3 4h6M3 6h6M3 8h6" stroke="#7bb" strokeWidth=".7" />
      </svg>
    )
  if (kind === 'folder')
    return (
      <svg viewBox="0 0 12 12" className="w-[12px] h-[12px] shrink-0">
        <path d="M2 1h4v10H2z" fill="#f5dd84" /><path d="M6 2h4v9H6z" fill="#fff1b0" stroke="#d0a840" strokeWidth=".6" />
      </svg>
    )
  return <div className="w-[11px] h-[11px] shrink-0 bg-[#06306b] border border-[#2f8ad8] text-[6px] leading-[9px] text-center font-bold text-[#8ed0ff]">Ps</div>
}

function Taskbar() {
  return (
    <div className="relative h-[22px] shrink-0 flex items-center bg-gradient-to-r from-[#2b7098] via-[#1a5791] to-[#15305a] border-t border-[#1b3c5c] text-[9px] text-white">
      <div className="w-[50px]" />
      <svg viewBox="0 0 12 12" className="w-[12px] h-[12px] shrink-0">
        <circle cx="3" cy="3" r="2.600" fill="#f4c020" /><circle cx="9" cy="3" r="2.600" fill="#e0503c" />
        <circle cx="3" cy="9" r="2.600" fill="#e04830" /><circle cx="9" cy="9" r="2.600" fill="#3c80d8" /><path d="M3 6h6" stroke="#58b040" strokeWidth="3" />
      </svg>
      {TASKS.map((t) => (
        <div key={t.label} className={`w-[116px] h-[20px] shrink-0 flex items-center gap-[3px] pl-[5px] rounded-[2px] border border-[#a4c4da]/70 bg-gradient-to-br whitespace-nowrap overflow-hidden ${t.cls}`}>
          <TaskIcon kind={t.kind} />
          <span className="text-[9px]">{t.label}</span>
        </div>
      ))}
      <svg viewBox="0 0 96 14" className="ml-auto w-[96px] h-[14px] shrink-0">
        <path d="M1 9h5L3.500 6z" fill="#fff" />
        <ellipse cx="20" cy="8" rx="4.500" ry="4.500" fill="#151515" /><circle cx="20" cy="4" r="3" fill="#151515" /><ellipse cx="20" cy="9" rx="2.500" ry="3" fill="#fff" /><path d="M16 6.500h8" stroke="#d22" strokeWidth="1.500" /><path d="M20 9h6v4h-6z" fill="#f5b030" />
        <circle cx="38" cy="7" r="5.800" fill="#8fd018" /><path d="M32.200 7a5.800 5.800 0 0 1 11.600 0z" fill="#f4e020" /><path d="M38 4v6M35 7h6" stroke="#187018" strokeWidth="2" />
        <path d="M51 11.500V10M53.500 11.500V8.500M56 11.500V6.500M58.500 11.500V4.500M61 11.500v-9" stroke="#fff" strokeWidth="1.500" />
        <rect x="71" y="3" width="6" height="9.500" rx="1" fill="none" stroke="#fff" strokeWidth="1.200" /><path d="M72.500 1.500h3M72.500 8h3v3h-3z" fill="#fff" stroke="#fff" strokeWidth=".8" />
        <path d="M85 5h2l3-3v10l-3-3h-2z" fill="#fff" /><path d="M91.500 5q1.500 2 0 4M93.500 3q3 4 0 8" fill="none" stroke="#fff" strokeWidth=".9" />
      </svg>
      <div className="ml-[14px] mr-[8px] w-[25px] text-[9px]">20:42</div>
      <div className="w-[10px] h-full border-l border-[#7b93b5] bg-gradient-to-br from-[#5f7fa8] to-[#1b3762]" />
      <svg viewBox="0 0 27 27" className="absolute left-[6px] top-[-5px] w-[27px] h-[27px]">
        <circle cx="13.500" cy="13.500" r="12.800" fill="url(#orb)" stroke="#a9c6da" strokeWidth=".8" />
        <path d="M8 7.500c2-1.200 3.800-1.200 5.700 0l-1.400 5.700c-1.700-1-3.500-1-5.700 0z" fill="#f0632a" />
        <path d="M14.500 8c2 1 3.800 1 6 0L19 13.500c-2 1-3.800 1-5.800 0z" fill="#8cc83c" />
        <path d="M6.300 14c2-1.200 3.800-1.200 5.700 0l-1.400 5.600c-1.700-1-3.500-1-5.700 0z" fill="#4aa8f0" />
        <path d="M12.800 14.500c2 1 3.800 1 6 0L17.300 20c-2 1-3.800 1-5.800 0z" fill="#fcc830" />
      </svg>
    </div>
  )
}

export default function App() {
  return (
    <div className="relative w-[1000px] h-[562px] overflow-hidden flex flex-col font-['Noto_Sans','Noto_Sans_CJK_SC',sans-serif] bg-[#d6d6d6]">
      <svg className="absolute w-0 h-0">
        <defs>
          <linearGradient id="grad"><stop offset="0" stopColor="#333" /><stop offset="1" stopColor="#f4f4f4" /></linearGradient>
          <linearGradient id="hexg" x2="0" y2="1"><stop offset="0" stopColor="#808080" /><stop offset="1" stopColor="#b4b4b4" /></linearGradient>
          <radialGradient id="orb" cy=".9"><stop offset="0" stopColor="#4fd0f4" /><stop offset=".5" stopColor="#2070a8" /><stop offset="1" stopColor="#5c88a8" /></radialGradient>
        </defs>
      </svg>
      <div className="h-[540px] shrink-0 flex flex-col border-t border-[#8f96a6] border-x-[3px] border-x-[#b4bac0] border-b-[3px] border-b-[#c0c0c0]">
        <MenuBar />
        <OptionsBar />
        <div className="flex flex-1 min-h-0 border-b border-[#777]">
          <Toolbox />
          <Document />
          <RightDock />
        </div>
      </div>
      <Taskbar />

      <ImeBar />
      <div className="absolute left-[-20px] top-[416px] w-[34px] h-[34px] rounded-full border-2 border-[#e0e0e0] bg-[#42c858] text-white text-[8px] font-bold leading-[30px] text-right pr-[2px]">55</div>
      <PresetWindow />
      <Watermark />
      <svg viewBox="0 0 1000 562" className="absolute inset-0 w-[1000px] h-[562px] pointer-events-none">
        <g fill="#fb3b3b">
          <path d="M618.500 11 606 41l4 2-14.500 12.500L595 37l5 2.500z" />
          <path d="M460 223 558.500 96.500 562.500 100l.5-22L546 86l5 4z" />
          <path d="M761 441 689 368.500 683.500 376l-5.500-17 17.500 6-4 3z" />
        </g>
      </svg>
    </div>
  )
}
